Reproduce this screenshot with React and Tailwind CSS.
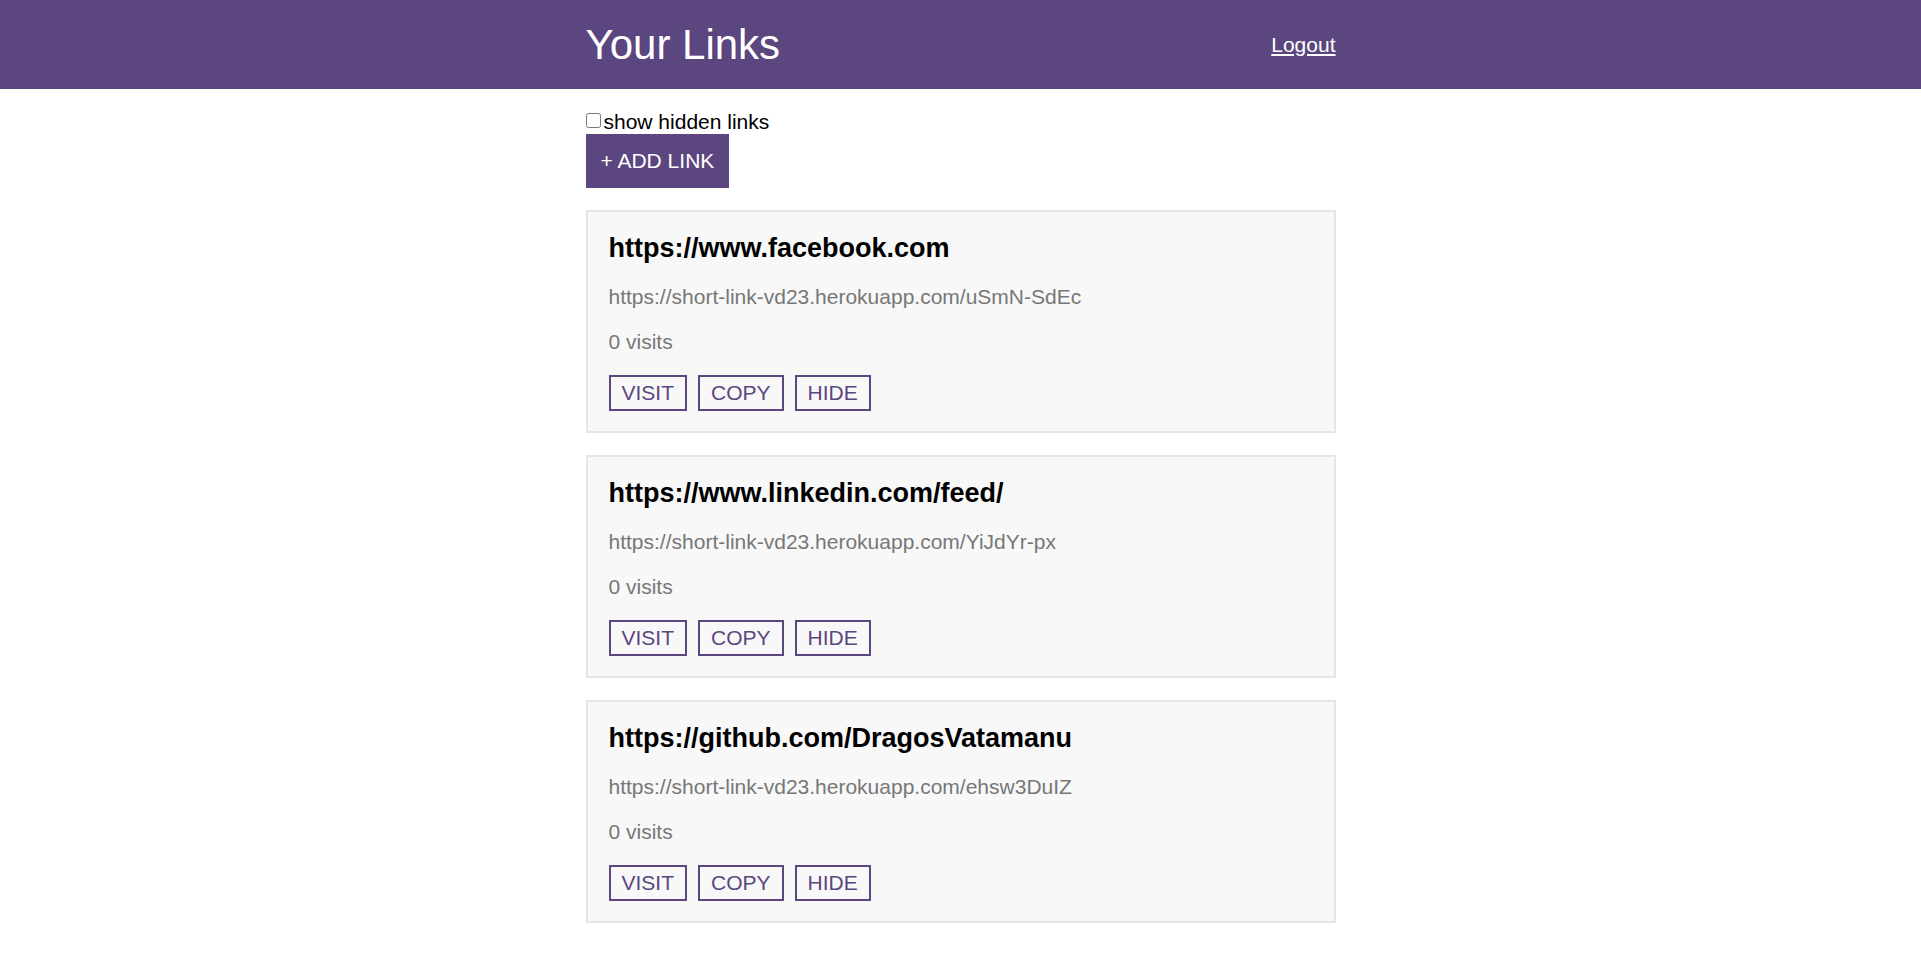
import React, { useState } from 'react';

const links = [
  {
    url: 'https://www.facebook.com',
    short: 'https://short-link-vd23.herokuapp.com/uSmN-SdEc',
    visits: 0,
  },
  {
    url: 'https://www.linkedin.com/feed/',
    short: 'https://short-link-vd23.herokuapp.com/YiJdYr-px',
    visits: 0,
  },
  {
    url: 'https://github.com/DragosVatamanu',
    short: 'https://short-link-vd23.herokuapp.com/ehsw3DuIZ',
    visits: 0,
  },
];

function LinkItem({ link }) {
  return (
    <div className="mt-[22px] border-2 border-[#e6e6e6] bg-[#f8f8f8] px-[21px] pt-[21px] pb-[20px]">
      <h2 className="text-[27px] leading-[31px] font-bold text-black">{link.url}</h2>
      <p className="mt-[21px] text-[#777777]">{link.short}</p>
      <p className="mt-[21px] text-[#777777]">{link.visits} visits</p>
      <div className="mt-[21px] flex gap-[11px]">
        {['VISIT', 'COPY', 'HIDE'].map((label) => (
          <button
            key={label}
            type="button"
            className="border-2 border-[#5b4680] px-[11px] py-[4px] text-[21px] leading-[24px] text-[#5b4680]"
          >
            {label}
          </button>
        ))}
      </div>
    </div>
  );
}

export default function App() {
  const [showHidden, setShowHidden] = useState(false);

  return (
    <div className="min-h-screen bg-white text-[21px] leading-[24px] font-['Liberation_Sans',Arial,sans-serif]">
      <header className="bg-[#5b4680]">
        <div className="mx-auto flex h-[89px] w-[750px] items-center justify-between">
          <h1 className="text-[42px] leading-[48px] font-normal text-white">Your Links</h1>
          <a href="#" className="text-[21px] text-white underline">
            Logout
          </a>
        </div>
      </header>

      <main className="mx-auto w-[750px] pb-10">
        <label className="mt-[21px] flex items-center">
          <input
            type="checkbox"
            checked={showHidden}
            onChange={(e) => setShowHidden(e.target.checked)}
            className="m-0 mr-[3px] h-[15px] w-[15px] -translate-y-[2px] accent-[#5b4680]"
          />
          <span className="text-black">show hidden links</span>
        </label>
        <button
          type="button"
          className="bg-[#5b4680] px-[15px] py-[15px] text-[21px] leading-[24px] text-white"
        >
          + ADD LINK
        </button>

        {links.map((link) => (
          <LinkItem key={link.short} link={link} />
        ))}
      </main>
    </div>
  );
}
